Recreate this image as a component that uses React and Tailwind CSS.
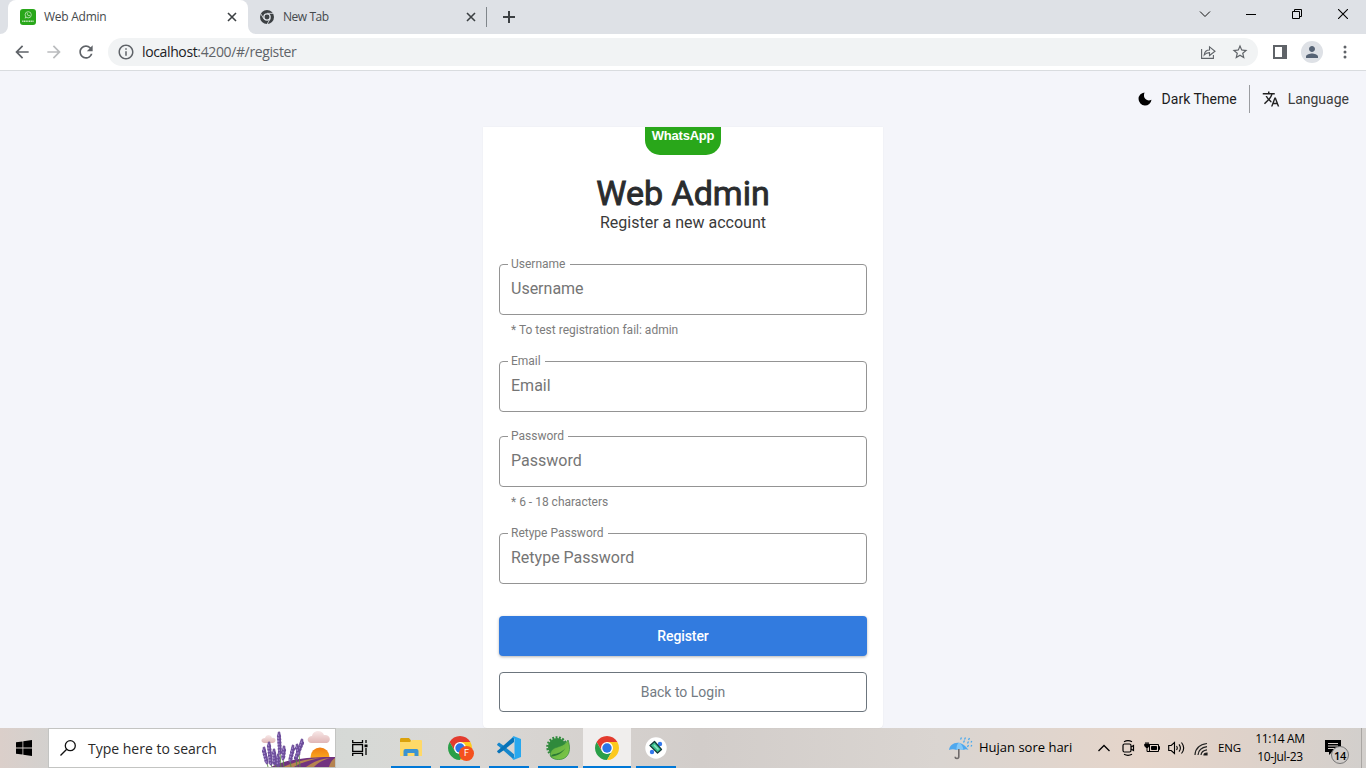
import React from "react";
import {
  MdArrowBack,
  MdArrowForward,
  MdRefresh,
  MdInfoOutline,
  MdStarBorder,
  MdPerson,
  MdTranslate,
} from "react-icons/md";

const fields = [
  { label: "Username", hint: "* To test registration fail: admin", gap: "w-[62px]" },
  { label: "Email", gap: "w-[37px]" },
  { label: "Password", hint: "* 6 - 18 characters", gap: "w-[60px]" },
  { label: "Retype Password", gap: "w-[100px]" },
];

function CloseX({ className }) {
  return (
    <svg viewBox="0 0 10 10" className={className} fill="none" stroke="#3c4043" strokeWidth="1.6">
      <path d="M1 1l8 8M9 1l-8 8" />
    </svg>
  );
}

function WhatsAppFavicon() {
  return (
    <svg viewBox="0 0 16 16" className="size-4 shrink-0">
      <rect width="16" height="16" rx="3" fill="#29a71a" />
      <circle cx="8.2" cy="5.8" r="3.1" fill="none" stroke="#b5e0b0" strokeWidth="0.9" />
      <path d="M4.6 9.6l.7-2 1.2 1.3zM6.8 4.3c-.3 1.4 1.2 3 2.8 3l.5-.8-1-.6-.5.4-1-1 .3-.5-.5-.9z" fill="#b5e0b0" />
      <path d="M2.2 12.2h11.6" stroke="#c4e8bf" strokeWidth="1.6" strokeDasharray="1.2 .5" />
    </svg>
  );
}

function ChromeMono() {
  return (
    <svg viewBox="0 0 48 48" className="size-[14px] shrink-0">
      <circle cx="24" cy="24" r="24" fill="#3c4043" />
      <circle cx="24" cy="24" r="13" fill="#dee1e6" />
      <circle cx="24" cy="24" r="8.5" fill="#3c4043" />
      <path d="M24 11.5h22M13 30L2 12M35 30L24 49" stroke="#dee1e6" strokeWidth="3" />
    </svg>
  );
}

function ChromeLogo({ className }) {
  return (
    <svg viewBox="0 0 48 48" className={className}>
      <path d="M3.22 12A24 24 0 0 1 44.78 12H24L13.6 30z" fill="#e33b2e" />
      <path d="M3.22 12L13.6 30 24 36l10.4-6L24 48A24 24 0 0 1 3.22 12z" fill="#2a9f48" />
      <path d="M44.78 12A24 24 0 0 1 24 48l10.4-18L24 12z" fill="#fcc91f" />
      <circle cx="24" cy="24" r="12" fill="#fff" />
      <circle cx="24" cy="24" r="9.4" fill="#2a74e8" />
    </svg>
  );
}

function TabStrip() {
  return (
    <div className="flex h-[34px] bg-[#dee1e6] font-['Open_Sans',sans-serif]">
      <svg viewBox="0 0 8 34" className="h-[34px] w-2">
        <path d="M8 26v8H0a8 8 0 0 0 8-8z" fill="#fff" />
      </svg>
      <div className="flex w-60 items-center rounded-t-lg bg-white pl-3">
        <WhatsAppFavicon />
        <span className="ml-2 grow text-[12px] tracking-[-0.25px] text-[#45494d]">Web Admin</span>
        <CloseX className="mr-[11px] size-[10px]" />
      </div>
      <svg viewBox="0 0 8 34" className="h-[34px] w-2">
        <path d="M0 26v8h8a8 8 0 0 1-8-8z" fill="#fff" />
      </svg>
      <div className="flex w-[230px] items-center pl-1">
        <ChromeMono />
        <span className="ml-[9px] grow text-[12px] tracking-[-0.45px] text-[#45494d]">New Tab</span>
        <CloseX className="mr-[10px] size-[10px]" />
      </div>
      <div className="mt-[7px] h-5 w-px bg-[#80868b]" />
      <svg viewBox="0 0 12 12" className="mt-[11px] ml-4 size-3" stroke="#3c4043" strokeWidth="2">
        <path d="M6 0v12M0 6h12" />
      </svg>
      <div className="ml-auto flex h-7 items-center text-black">
        <div className="flex w-[46px] justify-center">
          <svg viewBox="0 0 12 8" className="h-2 w-3" fill="none" stroke="#111">
            <path d="M1 1.5l5 5 5-5" />
          </svg>
        </div>
        <div className="flex w-[46px] justify-center">
          <div className="mt-px h-px w-[10px] bg-black" />
        </div>
        <div className="flex w-[46px] justify-center">
          <svg viewBox="0 0 10 10" className="size-[10px]" fill="none" stroke="#000">
            <path d="M.5 2.5h7v7h-7zM2.5 2.5v-2h7v7h-2" />
          </svg>
        </div>
        <div className="flex w-[46px] justify-center">
          <svg viewBox="0 0 10 10" className="size-[10px]" stroke="#000" strokeWidth="1.1">
            <path d="M0 0l10 10M10 0L0 10" />
          </svg>
        </div>
      </div>
    </div>
  );
}

function Toolbar() {
  return (
    <div className="flex h-[37px] items-center border-b border-[#d9dcdf] bg-white pl-3">
      <MdArrowBack className="size-5 text-[#5f6368]" />
      <MdArrowForward className="ml-3 size-5 text-[#babcbe]" />
      <MdRefresh className="ml-3 size-5 text-[#5f6368]" />
      <div className="ml-3 flex h-7 w-[1150px] items-center rounded-full bg-[#f1f3f4] pr-[9px] pl-[9px] text-[#5f6368]">
        <MdInfoOutline className="size-[18px]" />
        <span className="mb-px ml-[7px] grow font-['Open_Sans',sans-serif] text-[14px] tracking-[-0.37px]">
          <span className="text-[#202124]">localhost</span>:4200/#/register
        </span>
        <svg viewBox="0 0 16 16" className="size-4" fill="none" stroke="#5f6368" strokeWidth="1.1">
          <path d="M1.6 5v9.4h11.8V11" />
          <path d="M4.2 11c.4-3.3 2.300-5 5.300-5V2.800L15 7.200l-5.500 4.300V8.600c-2.300 0-4 .8-5.300 2.400z" />
        </svg>
        <MdStarBorder className="ml-[15px] size-[18px]" />
      </div>
      <svg viewBox="0 0 14 14" className="ml-[15px] h-[14px] w-[14px]">
        <path d="M0 0h14v14H0zM2 2v10h7V2z" fill="#5f6368" fillRule="evenodd" />
      </svg>
      <div className="ml-[14px] flex size-[22px] items-center justify-center rounded-full bg-[#dee1e6]">
        <MdPerson className="size-[18px] text-[#566375]" />
      </div>
      <svg viewBox="0 0 4 14" className="ml-[20px] h-[14px] w-1" fill="#5f6368">
        <circle cx="2" cy="2" r="1.5" />
        <circle cx="2" cy="7" r="1.5" />
        <circle cx="2" cy="12" r="1.5" />
      </svg>
    </div>
  );
}

function Field({ label, hint, gap }) {
  return (
    <div>
      <div className="relative flex h-[51px] rounded border border-[#949494] pt-3 pl-[11px]">
        <span className={"absolute -top-[9px] left-2 h-4 bg-white pl-[3px] text-[12px] leading-4 whitespace-nowrap text-[#7c7c7c] " + gap}>
          {label}
        </span>
        <span className="text-[16px] leading-6 text-[#757575]">{label}</span>
      </div>
      {hint && <p className="mt-[7px] pl-3 text-[12px] leading-4 text-[#7c7c7c]">{hint}</p>}
    </div>
  );
}

function RegisterPage() {
  return (
    <main className="flex h-[657px] flex-col bg-[#f4f5fa] font-[Roboto,sans-serif]">
      <div className="flex h-14 shrink-0 items-center justify-end pr-[17px] text-[14px]">
        <svg viewBox="0 0 14 14" className="size-[14px]">
          <path d="M6.500.5a6.500 6.500 0 1 0 7 7.200Q10 9.500 7.500 7T6.500.5z" fill="#000" />
        </svg>
        <span className="ml-[10px] text-[#1c1c1c]">Dark Theme</span>
        <div className="ml-3 h-7 w-px bg-[#9a9ca0]" />
        <MdTranslate className="ml-[12px] size-[18px] text-[#222]" />
        <span className="ml-[8px] text-[#3c3c3c]">Language</span>
      </div>
      <div className="mx-auto flex w-[400px] grow flex-col rounded-b bg-white px-4 shadow-[0_0_1px_rgba(0,0,0,0.12)]">
        <div className="mx-auto h-7 w-[76px] rounded-b-[15px] bg-[#29a71a] pt-[1px] text-center font-['Liberation_Sans',sans-serif] text-[13px] leading-4 font-bold tracking-[-0.2px] text-white">
          WhatsApp
        </div>
        <h1 className="mt-[18px] mb-px text-center text-[34px] leading-10 font-normal text-[#2a2c2e] [-webkit-text-stroke:0.9px_#2a2c2e]">
          Web Admin
        </h1>
        <p className="text-center text-[16px] leading-[18px] text-[#3a3a3a]">Register a new account</p>
        <div className="mt-8 flex flex-col">
          <Field {...fields[0]} />
          <div className="h-[23px]" />
          <Field {...fields[1]} />
          <div className="h-[24px]" />
          <Field {...fields[2]} />
          <div className="h-[23px]" />
          <Field {...fields[3]} />
        </div>
        <button className="mt-8 h-10 shrink-0 rounded bg-[#327bdf] text-[14px] font-medium tracking-[-0.1px] text-white shadow-[0_1px_3px_rgba(0,0,0,0.3)]">
          Register
        </button>
        <button className="mt-4 h-10 shrink-0 rounded border border-[#6c757d] text-[14px] text-[#737b83]">
          Back to Login
        </button>
      </div>
    </main>
  );
}

const sprigs = [
  [6, 34, 3, 20], [10, 35, 8, 15], [14, 34, 13, 22], [19, 24, 18, 5], [22, 30, 23, 19],
  [29, 32, 32, 18], [35, 29, 41, 12], [38, 25, 36, 17], [17, 36, 17, 27],
];

function Lavender() {
  return (
    <svg viewBox="0 0 74 38" className="ml-auto h-[38px] w-[74px]">
      <defs>
        <linearGradient id="sun" x1="0" y1="0" x2="0" y2="1">
          <stop offset="0" stopColor="#f07d12" />
          <stop offset="1" stopColor="#ffc928" />
        </linearGradient>
        <linearGradient id="cloud" x1="0" y1="0" x2="0" y2="1">
          <stop offset="0" stopColor="#f8e9e9" />
          <stop offset="1" stopColor="#e0b6b6" />
        </linearGradient>
      </defs>
      <path d="M3 14c-4-1-3-5 1-5 1-4 6-4 7 0 4-1 5 4 1 5z" fill="url(#cloud)" />
      <path d="M50 14c-5-1-4-7 1-7 1-6 10-7 12-1 6-1 8 6 3 8z" fill="url(#cloud)" />
      <circle cx="59" cy="28" r="9.500" fill="url(#sun)" />
      <path d="M10 38c12-6 28-10 64-10v10z" fill="#71327f" />
      <path d="M22 38c11-5 24-8 37-9-13 3-20 5-26 9zM45 38c7-5 14-8 24-9-10 3-13 6-16 9zM68 38c1-4 3-7 6-9v9z" fill="#b58350" />
      {sprigs.map(([x1, y1, x2, y2], i) => (
        <g key={i} strokeLinecap="round">
          <path d={`M${x1 + 1} 38L${x1} ${y1}L${x2} ${y2}`} stroke="#5b8a42" strokeWidth=".9" fill="none" />
          <path d={`M${x2} ${y2 - 1}L${x1} ${y1}`} stroke="#75579f" strokeWidth="2.800" />
          <path d={`M${x2} ${y2 + 2}L${x1} ${y1}`} stroke="#6c4d9a" strokeWidth="4.200" strokeDasharray=".4 2.800" />
          <path d={`M${x2 - 0.6} ${y2 + 1}L${x1 - 0.6} ${y1}`} stroke="#9c80c8" strokeWidth="1.500" strokeDasharray=".4 2.600" />
        </g>
      ))}
    </svg>
  );
}

function TaskItem({ children, active, className = "" }) {
  return (
    <div className={"flex h-10 flex-col items-center " + (active ? "w-12 bg-[#f0eeed] " : "w-10 ") + className}>
      <div className="flex h-[38px] items-center pt-[2px]">{children}</div>
      <div className="h-[2px] w-full bg-[#0078d7]" />
    </div>
  );
}

function SpringIcon() {
  return (
    <svg viewBox="0 0 24 24" className="size-6">
      <defs>
        <linearGradient id="leaf" x1="0" y1="0" x2="1" y2="1">
          <stop offset="0" stopColor="#5cab3e" />
          <stop offset="1" stopColor="#80c94a" />
        </linearGradient>
      </defs>
      <circle cx="11" cy="11" r="9" fill="#2f8a3c" />
      <circle cx="11" cy="11" r="9.600" fill="none" stroke="#2f8a3c" strokeWidth="2.400" strokeDasharray="1.900 1.450" />
      <path d="M22 4c2.200 6 2.500 13-2 17-4 3.500-11 3.500-15 0-2-3 0-8 5-9.500C15 10 19.500 8.500 22 4z" fill="url(#leaf)" stroke="#2f8a3c" strokeWidth=".7" />
      <path d="M4.500 20.500c7-.5 12-3.500 15-8.500-3.500 4-7.500 5.500-13 6.500z" fill="#2c7a35" />
    </svg>
  );
}

function Taskbar() {
  return (
    <footer className="flex h-10 items-center bg-[linear-gradient(90deg,#dbcfca_0px,#d1d1cf_60px,#d6d9d6_350px,#dad8d5_450px,#d2cdca_700px,#dad5d1_940px,#e5d5ca_1140px,#ded2ca_1250px,#d2cfcc_1366px)] font-['Open_Sans',sans-serif] text-black">
      <div className="flex w-12 justify-center">
        <svg viewBox="0 0 16 16" className="size-4" fill="#000">
          <path d="M0 2.300l6.500-.9v6.200H0zM7.300 1.300L16 0v7.600H7.300zM0 8.400h6.500v6.200L0 13.700zM7.300 8.400H16V16l-8.700-1.200z" />
        </svg>
      </div>
      <div className="flex h-10 w-[288px] items-center border border-[#c3c4c2] bg-white pl-[11px]">
        <svg viewBox="0 0 16 16" className="size-4" fill="none" stroke="#111" strokeWidth="1.300">
          <circle cx="10.300" cy="5.700" r="5" />
          <path d="M6.700 9.300L.5 15.500" />
        </svg>
        <span className="ml-[12px] text-[14px] whitespace-nowrap text-[#2a2a2a]">Type here to search</span>
        <Lavender />
      </div>
      <div className="flex w-[55px] pl-4">
        <svg viewBox="0 0 16 16" className="size-4" fill="none" stroke="#000" strokeWidth="1.300">
          <path d="M.7 0v2.700h9.800V0M.7 4.700h9.800v6.600H.7zM.7 16v-2.700h9.800V16M14 0v3M14 8v7" />
          <path d="M12.500 4.500h3v2.700h-3z" fill="#000" stroke="none" />
        </svg>
      </div>
      <TaskItem>
        <svg viewBox="0 0 22 20" className="h-5 w-[22px]">
          <path d="M0 1.500Q0 0 1 0h8l2 2.500V5H0z" fill="#dba20c" />
          <path d="M0 4h10l2-2h9q1 0 1 1v15H0z" fill="#ffd967" />
          <path d="M3.500 18v-5q0-2 2-2h11q2 0 2 2v5h-4v-3h-7v3z" fill="#3a93d2" />
        </svg>
      </TaskItem>
      <TaskItem className="ml-[9px]">
        <div className="relative">
          <ChromeLogo className="size-6" />
          <span className="absolute top-[10px] left-[11px] flex size-[15px] items-center justify-center rounded-full bg-[#f4511e] font-[Roboto,sans-serif] text-[9px] leading-none text-white">
            F
          </span>
        </div>
      </TaskItem>
      <TaskItem className="ml-[9px]">
        <svg viewBox="0 0 24 24" className="size-6">
          <path d="M0 8.200L2 6.500l4 2.700 11 9v5.500L.5 9.300z" fill="#1687cc" />
          <path d="M0 15.800l2 1.700 4-2.700L17 6V.3L.5 14.700z" fill="#0873b8" />
          <path d="M17 .3L24 3v18l-7 2.700-2-1 2.500-1.500V2.800L15 1.300z" fill="#28a8ef" />
        </svg>
      </TaskItem>
      <TaskItem className="ml-[9px]">
        <SpringIcon />
      </TaskItem>
      <TaskItem active className="ml-[5px]">
        <ChromeLogo className="size-6" />
      </TaskItem>
      <TaskItem className="ml-[5px]">
        <svg viewBox="0 0 22 22" className="size-[22px]">
          <circle cx="11" cy="11" r="10.700" fill="#fff" />
          <circle cx="15" cy="7" r="2.200" fill="#3478ed" />
          <circle cx="7" cy="15" r="2.200" fill="#3478ed" />
          <path d="M9.500 4.500l7 8-4 3.500L5 8.500z" fill="#3dc08d" stroke="#123b3a" strokeWidth="1.300" strokeLinejoin="round" />
          <path d="M9 8l4.500 4.500" stroke="#8fe7c0" strokeWidth="1.500" />
        </svg>
      </TaskItem>
      <div className="ml-auto flex h-10 items-center">
        <svg viewBox="0 0 24 24" className="size-6">
          <path d="M0 14C1 6.500 12 2.500 19.500 14c-2-1-3.500-1-5 0-2-1-5-1-7 0-2.500-1-5-1-7.500 0z" fill="#4fa8ee" />
          <path d="M7.500 14c0-4 .5-6 2.500-7.500 2.500 1.500 4 4 4.500 7.500-2-1-5-1-7 0z" fill="#84c8f7" />
          <path d="M9.800 13v7.500q0 2-1.800 2t-1.800-1.700" fill="none" stroke="#6e6a6a" strokeWidth="1.600" />
          <path d="M11.500 3.500l1-2M15.500 3.500l1-2M19.500 4l1-2M14.500 6.500l1-2M18.500 7.500l1-2M22 6.500l.8-1.500M18.500 11l1-2M22 10.500l.8-1.500" stroke="#4aa9ed" strokeWidth="1.300" />
        </svg>
        <span className="ml-[6px] w-[95px] text-[13px] whitespace-nowrap">Hujan sore hari</span>
        <svg viewBox="0 0 12 8" className="ml-[24px] h-2 w-3" fill="none" stroke="#000" strokeWidth="1.300">
          <path d="M.5 7L6 1.500 11.500 7" />
        </svg>
        <svg viewBox="0 0 14 16" className="ml-[12px] h-4 w-[14px]" fill="none" stroke="#000" strokeWidth="1.200">
          <rect x="1" y="4" width="8" height="8" rx="1.500" />
          <path d="M9 7l2.500-1.500v5L9 9M2 1.700q4-2 8 0M2 14.300q4 2 8 0" />
        </svg>
        <svg viewBox="0 0 16 12" className="ml-[8px] h-3 w-4" fill="none" stroke="#000">
          <path d="M5.500 2.500h9v7h-9zM14.500 4.500h1v3h-1" />
          <path d="M7.500 4.500h5v3h-5zM.8 2h4.400v2L4 5.500H2L.8 4z" fill="#000" />
          <path d="M2 0v2M4 0v2M3 5v4.500h3" />
        </svg>
        <svg viewBox="0 0 17 14" className="ml-2 h-[14px] w-[17px]" fill="none" stroke="#000" strokeWidth="1.100">
          <path d="M.7 4.500h2.500L6.500 1.500v11L3.200 9.500H.7zM8.500 5q1.500 2 0 4M11 3.300q2.800 3.700 0 7.400M13.500 1.500q4.400 5.500 0 11" />
        </svg>
        <svg viewBox="0 0 14 14" className="mt-[2px] ml-[9px] size-[14px]" fill="none" stroke="#222" strokeWidth="1.200">
          <path d="M1 13Q1.500 3 13 1.500M4 13Q4.500 6 13 4.700M7 13Q7.500 8.500 13 7.800" />
          <path d="M10 13q0-2 3-2v2z" fill="#000" />
        </svg>
        <span className="ml-[10px] w-[24px] text-[11.500px] tracking-[-0.2px]">ENG</span>
        <div className="ml-[6px] w-[64px] text-center text-[12px] leading-[18px] tracking-[-0.35px] whitespace-nowrap">
          <div>11:14 AM</div>
          <div>10-Jul-23</div>
        </div>
        <div className="relative ml-[13px] h-7 w-[26px] pt-[6px]">
          <svg viewBox="0 0 16 16" className="size-4">
            <path d="M0 0h16v12H7l-3 3v-3H0z" fill="#000" />
            <path d="M3 3.500h10M3 6h10M3 8.500h7" stroke="#d9d0ca" />
          </svg>
          <span className="absolute top-[12px] left-[6px] flex size-[18px] items-center justify-center rounded-full border border-[#777] bg-[#d0ccc9] text-[11px] leading-none font-semibold tracking-[-0.3px]">
            14
          </span>
        </div>
        <div className="ml-[10px] h-10 w-px bg-[#a9a6a3]" />
        <div className="w-1" />
      </div>
    </footer>
  );
}

export default function App() {
  return (
    <div className="h-[768px] w-[1366px] overflow-hidden">
      <TabStrip />
      <Toolbar />
      <RegisterPage />
      <Taskbar />
    </div>
  );
}
